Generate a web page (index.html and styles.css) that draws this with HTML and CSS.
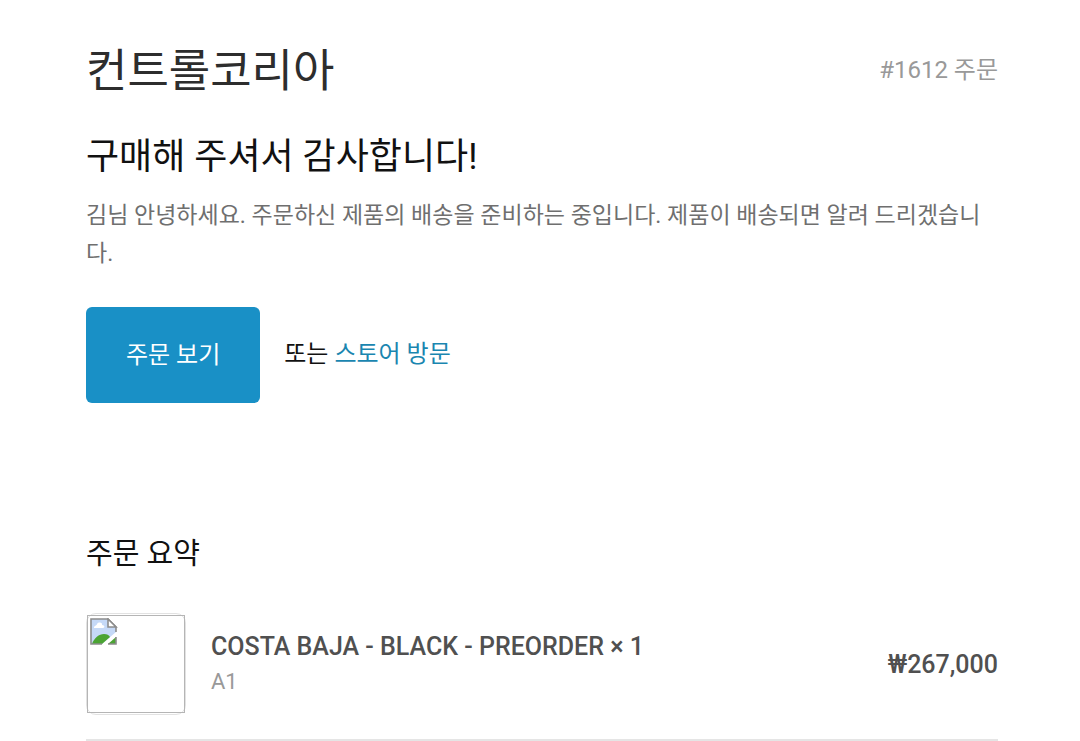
FILE: index.html
```html
<!DOCTYPE html>
<html lang="ko">
<head>
<meta charset="utf-8">
<meta name="viewport" content="width=device-width, initial-scale=1">
<title>컨트롤코리아</title>
<link rel="stylesheet" href="styles.css">
</head>
<body>
<main class="page">
  <header class="header">
    <h1 class="shop">컨트롤코리아</h1>
    <span class="order-number">#1612 주문</span>
  </header>
  <section class="intro">
    <h2 class="thanks">구매해 주셔서 감사합니다!</h2>
    <p class="message">김님 안녕하세요. 주문하신 제품의 배송을 준비하는 중입니다. 제품이 배송되면 알려 드리겠습니다.</p>
    <div class="actions">
      <a class="button" href="#order">주문 보기</a>
      <p class="visit">또는 <a class="link" href="#store">스토어 방문</a></p>
    </div>
  </section>
  <section class="summary" id="order">
    <h3 class="summary-title">주문 요약</h3>
    <div class="item">
      <div class="thumb">
        <div class="thumb-frame">
          <svg class="broken" viewBox="0 0 28 28" aria-hidden="true">
            <path d="M1 1H18L26 9V14L12 26H1Z" fill="#c5d9f7"/>
            <path d="M4 10C4 7 7 8 7 6C9 3 13 5 12 7C15 7 15 10 13 10Z" fill="#fff"/>
            <path d="M2 26C4 20 9 16 14 16C17 16 19 17 20 19L12 26Z" fill="#4ba433"/>
            <path d="M18 26L26 19V26Z" fill="#4ba433"/>
            <path d="M26 14V9L18 1H1V26H12M18 26H26V19" fill="none" stroke="#8c8c8c" stroke-width="1.6"/>
            <path d="M18 1V9H26Z" fill="#fff" stroke="#8c8c8c" stroke-width="1.6"/>
          </svg>
        </div>
      </div>
      <div class="details">
        <span class="name">COSTA BAJA - BLACK - PREORDER × 1</span>
        <span class="variant">A1</span>
      </div>
      <span class="price">₩267,000</span>
    </div>
  </section>
</main>
</body>
</html>
```
FILE: styles.css
```css
* { box-sizing: border-box; }
body {
  margin: 0;
  background: #fff;
  color: #111;
  font-family: Roboto, "Noto Sans CJK KR", sans-serif;
  font-size: 24px;
}
h1, h2, h3, p { margin: 0; font-weight: 400; }
a { text-decoration: none; }
.page { padding: 42px 82px 0 86px; }
.header { display: flex; align-items: flex-start; justify-content: space-between; }
.shop { font-size: 45px; line-height: 60px; color: #2d2d2d; }
.order-number { color: #999; line-height: 56px; }
.thanks { margin-top: 31px; font-size: 36px; line-height: 48px; }
.message { margin-top: 16px; font-size: 23px; color: #6f6f6f; line-height: 38px; word-break: break-all; }
.actions { display: flex; align-items: center; gap: 24px; margin-top: 34px; }
.button {
  padding: 30px 40px;
  border-radius: 6px;
  background: #1990c6;
  color: #fff;
  line-height: 36px;
}
.visit { padding-bottom: 8px; }
.link { color: #1a86b0; }
.summary-title { margin-top: 131px; font-size: 29px; line-height: 40px; }
.item {
  display: flex;
  align-items: center;
  margin-top: 39px;
  padding-bottom: 24px;
  border-bottom: 2px solid #e5e5e5;
}
.thumb { width: 100px; margin-right: 25px; padding: 1px 0; border: 1px solid #e2e2e2; border-radius: 10px; }
.thumb-frame { height: 98px; padding: 2px; border: 1px solid #b5b5b5; }
.broken { display: block; width: 28px; height: 28px; }
.details { display: flex; flex: 1; flex-direction: column; }
.name { font-size: 25px; font-weight: 500; line-height: 36px; color: #505050; }
.variant { font-size: 22px; line-height: 34px; color: #999; }
.price { font-size: 25px; font-weight: 500; color: #505050; }
```
